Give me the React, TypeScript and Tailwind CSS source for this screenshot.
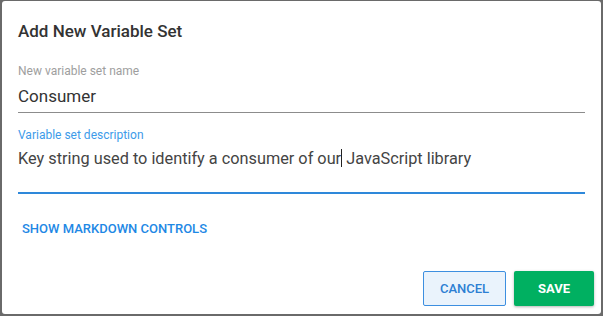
export default function App() {
  return (
    <div className="w-[603px] h-[316px] bg-[#6a6a6a] pt-px pl-[2px] pr-[2px] pb-[2px] font-['Roboto',sans-serif]">
      <div className="h-full bg-white rounded-[3px] flex flex-col">
        {/* Header */}
        <h2 className="pl-[16px] pt-[20px] text-[17px] leading-[20px] font-medium text-[#333]">
          Add New Variable Set
        </h2>

        {/* Name field */}
        <div className="mx-[16px] mt-[23px]">
          <label className="block text-[12px] leading-[14px] text-[#9e9e9e]">
            New variable set name
          </label>
          <div className="mt-[8px] pb-[6px] text-[17px] leading-[20px] text-[#333] border-b border-[#8c8c8c]">
            Consumer
          </div>
        </div>

        {/* Description field */}
        <div className="mx-[16px] mt-[15px]">
          <label className="block text-[12px] leading-[14px] text-[#3d9be9]">
            Variable set description
          </label>
          <div className="mt-[7px] h-[45px] text-[16.3px] leading-[20px] text-[#444] border-b-2 border-[#2e88da]">
            Key string used to identify a consumer of our
            <span className="inline-block w-px h-[18px] bg-[#222] align-[-3px]" /> JavaScript library
          </div>
        </div>

        <button className="self-start ml-[20px] mt-[27px] text-[13px] leading-[15px] font-medium text-[#1e88e5] uppercase">
          Show markdown controls
        </button>

        {/* Actions */}
        <div className="mt-auto mb-[8px] mr-[7px] flex justify-end gap-[8px]">
          <button className="w-[83px] h-[35px] bg-[#eaf3fc] border border-[#3d8fe0] rounded-[2px] text-[13px] font-medium text-[#2d7fd3] uppercase">
            Cancel
          </button>
          <button className="w-[80px] h-[35px] bg-[#00b061] rounded-[2px] shadow-[0_1px_3px_rgba(0,0,0,0.3)] text-[13px] font-bold text-white uppercase">
            Save
          </button>
        </div>
      </div>
    </div>
  );
}
